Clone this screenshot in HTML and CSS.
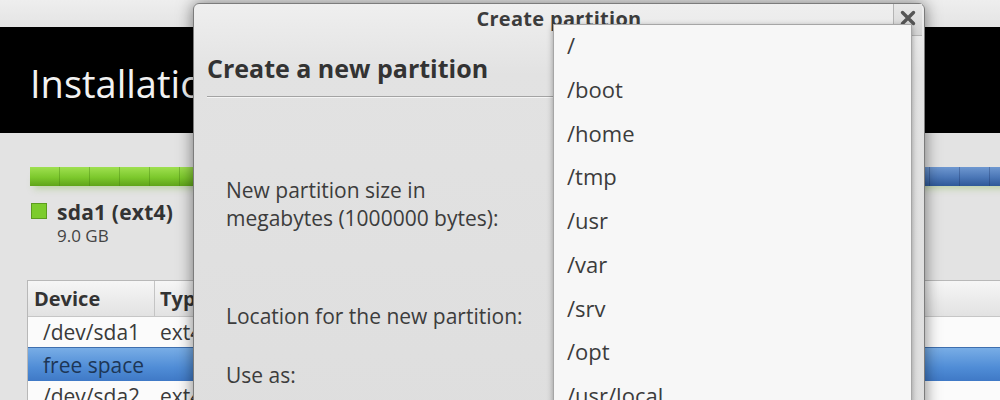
FILE: index.html
```html
<!DOCTYPE html>
<html lang="en">
<head>
<meta charset="utf-8">
<title>Create partition</title>
<link rel="stylesheet" href="styles.css">
</head>
<body>
<div class="app">
  <div class="topstrip"></div>
  <div class="banner"><h1 class="banner-title">Installation type</h1></div>
  <div class="content">
    <div class="diskbar">
      <div class="seg seg-green"></div>
      <div class="seg seg-blue"></div>
    </div>
    <div class="legend">
      <span class="swatch"></span>
      <div class="legend-text">
        <div class="legend-name">sda1 (ext4)</div>
        <div class="legend-size">9.0 GB</div>
      </div>
    </div>
    <div class="ptable">
      <div class="prow phead">
        <div class="pcell c1">Device</div>
        <div class="pcell c2">Type</div>
      </div>
      <div class="prow">
        <div class="pcell c1 indent">/dev/sda1</div>
        <div class="pcell c2">ext4</div>
      </div>
      <div class="prow selected">
        <div class="pcell c1 indent">free space</div>
        <div class="pcell c2"></div>
      </div>
      <div class="prow">
        <div class="pcell c1 indent">/dev/sda2</div>
        <div class="pcell c2">ext4</div>
      </div>
    </div>
  </div>
</div>

<div class="dialog">
  <div class="titlebar">
    <span class="dtitle">Create partition</span>
    <span class="close">
      <svg class="close-icon" width="16" height="16" viewBox="0 0 16 16" aria-hidden="true">
        <path d="M2.5 2.5 L13.5 13.5 M13.5 2.5 L2.5 13.5" stroke="#565656" stroke-width="3.4" stroke-linecap="round" fill="none"/>
      </svg>
    </span>
  </div>
  <div class="dbody">
    <h2 class="dheading">Create a new partition</h2>
    <div class="sep"></div>
    <div class="form">
      <div class="lbl lbl-size">New partition size in<br>megabytes (1000000 bytes):</div>
      <div class="lbl lbl-loc">Location for the new partition:</div>
      <div class="lbl lbl-use">Use as:</div>
    </div>
  </div>
  <div class="menu">
    <ul class="menu-list">
      <li>/</li>
      <li>/boot</li>
      <li>/home</li>
      <li>/tmp</li>
      <li>/usr</li>
      <li>/var</li>
      <li>/srv</li>
      <li>/opt</li>
      <li>/usr/local</li>
    </ul>
  </div>
</div>
</body>
</html>
```

FILE: styles.css
```css
html, body {
  margin: 0;
  padding: 0;
  overflow: hidden;
  width: 1000px;
  height: 400px;
}
body {
  background: #e3e3e3;
  font-family: "Open Sans", "DejaVu Sans", sans-serif;
  color: #3a3a3a;
  position: relative;
}

/* background installer window */
.topstrip {
  height: 27px;
  background: linear-gradient(#eeeeee, #e4e4e4);
}
.banner {
  height: 106px;
  box-sizing: border-box;
  background: #000;
  padding: 36px 0 0 30px;
}
.banner-title {
  margin: 0;
  font-weight: 400;
  font-size: 38px;
  line-height: 40px;
  color: #f2f2f2;
  white-space: nowrap;
}
.content {
  padding: 34px 0 0 30px;
}
.diskbar {
  display: flex;
  width: 1000px;
  height: 19px;
  box-shadow: 0 7px 7px -4px rgba(120, 180, 60, 0.35);
}
.seg {
  height: 19px;
}
.seg-green {
  width: 480px;
  background:
    repeating-linear-gradient(90deg, transparent 0 29px, rgba(60, 120, 10, 0.35) 29px 30px),
    linear-gradient(#9fe050, #7cc82c 55%, #5fa41a);
}
.seg-blue {
  flex: 1;
  background:
    repeating-linear-gradient(90deg, transparent 0 29px, rgba(20, 40, 90, 0.3) 29px 30px),
    linear-gradient(#6f98d0, #4a76b6 55%, #2f5a98);
}
.legend {
  display: flex;
  align-items: flex-start;
  gap: 10px;
  margin: 17px 0 0 1px;
}
.swatch {
  width: 14px;
  height: 14px;
  border: 1px solid #5c9c1e;
  background: #7ccc2c;
  flex: none;
}
.legend-text {
  margin-top: -3px;
}
.legend-name {
  font-weight: 700;
  font-size: 21px;
  line-height: 24px;
  color: #333;
  letter-spacing: 0.2px;
}
.legend-size {
  font-size: 17px;
  line-height: 24px;
  color: #444;
}
.ptable {
  margin: 32px 0 0 -3px;
  width: 1000px;
  background: #fbfbfb;
  border: 1px solid #b8b8b8;
  border-right: none;
}
.prow {
  display: flex;
  height: 30px;
  align-items: center;
  font-size: 21px;
  color: #3a3a3a;
}
.phead {
  height: 35px;
  background: linear-gradient(#f6f6f6, #e2e2e2);
  border-bottom: 1px solid #c6c6c6;
  font-weight: 700;
  font-size: 20px;
  color: #333;
}
.pcell {
  height: 100%;
  display: flex;
  align-items: center;
  box-sizing: border-box;
  white-space: nowrap;
}
.c1 {
  width: 127px;
  padding-left: 6px;
}
.phead .c1 {
  border-right: 1px solid #c4c4c4;
}
.c2 {
  padding-left: 5px;
  flex: 1;
}
.indent {
  padding-left: 15px;
}
.selected {
  height: 34px;
  background: linear-gradient(#78ade6, #4f8cd6 60%, #3f79c6);
  border-top: 1px solid #3e6fae;
  box-sizing: border-box;
  color: #1d3656;
}

/* dialog window */
.dialog {
  position: absolute;
  left: 193px;
  top: 3px;
  width: 730px;
  height: 440px;
  border: 1px solid #7c7c7c;
  border-radius: 6px 6px 0 0;
  background: linear-gradient(#efefef, #e2e2e2 70px, #dedede);
  box-shadow: 0 0 16px rgba(0, 0, 0, 0.5);
}
.titlebar {
  position: relative;
  height: 32px;
  line-height: 30px;
  text-align: center;
}
.dtitle {
  font-weight: 700;
  font-size: 20px;
  color: #3c3c3c;
  letter-spacing: 0.3px;
}
.close {
  position: absolute;
  right: 2px;
  top: 0;
  width: 29px;
  height: 32px;
  box-sizing: border-box;
  border-left: 1px solid #b4b4b4;
  border-bottom: 1px solid #b4b4b4;
  background: linear-gradient(#e8e8e8, #d4d4d4);
  display: flex;
  align-items: center;
  justify-content: center;
  padding-bottom: 4px;
}
.close-icon {
  display: block;
}
.dbody {
  padding: 0 14px 0 13px;
}
.dheading {
  margin: 15px 0 0;
  font-size: 25px;
  line-height: 34px;
  font-weight: 700;
  color: #333;
  white-space: nowrap;
}
.sep {
  margin-top: 11px;
  border-top: 1px solid #a3a3a3;
  border-bottom: 1px solid #f4f4f4;
}
.form {
  padding-left: 19px;
  display: flex;
  flex-direction: column;
}
.lbl {
  font-size: 21px;
  line-height: 28px;
  color: #3c3c3c;
  white-space: nowrap;
}
.lbl-size {
  margin-top: 78px;
}
.lbl-loc {
  margin-top: 70px;
}
.lbl-use {
  margin-top: 31px;
}

/* popup menu */
.menu {
  position: absolute;
  left: 359px;
  top: 20px;
  width: 357px;
  height: 420px;
  background: #f7f7f7;
  border: 1px solid #a6a6a6;
  box-shadow: 0 2px 6px rgba(0, 0, 0, 0.35);
  overflow: hidden;
}
.menu-list {
  list-style: none;
  margin: -1px 0 0;
  padding: 0 0 0 13px;
}
.menu-list li {
  height: 43.75px;
  line-height: 43.75px;
  font-size: 22px;
  color: #3c3c3c;
}
```
